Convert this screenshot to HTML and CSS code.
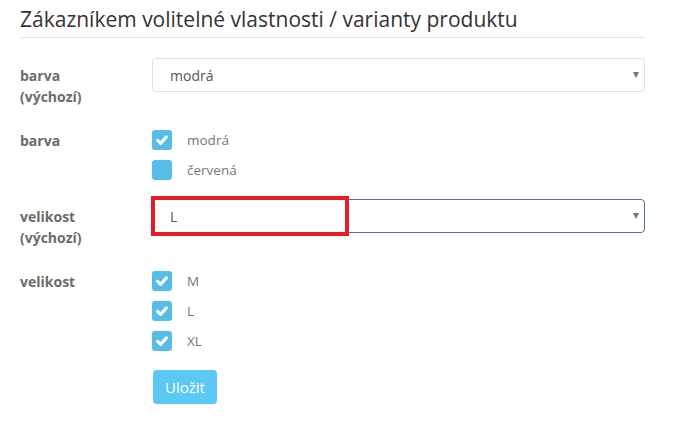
FILE: index.html
```html
<!DOCTYPE html>
<html lang="cs">
<head>
    <meta charset="UTF-8">
    <title>Varianty produktu</title>
    <link rel="stylesheet" href="styles.css">
</head>
<body>
    <div class="panel">
        <h2>Zákazníkem volitelné vlastnosti / varianty produktu</h2>

        <div class="form-row">
            <label class="control-label">barva<br>(výchozí)</label>
            <div class="select-wrap">
                <select>
                    <option>modrá</option>
                    <option>červená</option>
                </select>
            </div>
        </div>

        <div class="form-row">
            <label class="control-label">barva</label>
            <div class="checks">
                <div class="check">
                    <span class="box on"><svg viewBox="0 0 20 20"><path d="M5.6 10.4 L8.7 13.3 L14.4 6.9"/></svg></span>
                    <span class="check-text">modrá</span>
                </div>
                <div class="check">
                    <span class="box"></span>
                    <span class="check-text">červená</span>
                </div>
            </div>
        </div>

        <div class="form-row">
            <label class="control-label">velikost<br>(výchozí)</label>
            <div class="select-wrap focused">
                <select>
                    <option>L</option>
                    <option>M</option>
                    <option>XL</option>
                </select>
                <span class="highlight"></span>
            </div>
        </div>

        <div class="form-row">
            <label class="control-label">velikost</label>
            <div class="checks">
                <div class="check">
                    <span class="box on"><svg viewBox="0 0 20 20"><path d="M5.6 10.4 L8.7 13.3 L14.4 6.9"/></svg></span>
                    <span class="check-text">M</span>
                </div>
                <div class="check">
                    <span class="box on"><svg viewBox="0 0 20 20"><path d="M5.6 10.4 L8.7 13.3 L14.4 6.9"/></svg></span>
                    <span class="check-text">L</span>
                </div>
                <div class="check">
                    <span class="box on"><svg viewBox="0 0 20 20"><path d="M5.6 10.4 L8.7 13.3 L14.4 6.9"/></svg></span>
                    <span class="check-text">XL</span>
                </div>
            </div>
        </div>

        <div class="form-row">
            <span class="control-label"></span>
            <button class="btn-save">Uložit</button>
        </div>
    </div>
</body>
</html>
```

FILE: styles.css
```css
body {
    margin: 0;
    background: #fff;
    font-family: 'Open Sans', sans-serif;
    color: #333;
}
.panel {
    width: 625px;
    padding: 0 20px;
}
h2 {
    margin: 0 0 20px;
    padding: 6px 0 4px;
    font-size: 21px;
    font-weight: 400;
    line-height: 27px;
    color: #333;
    border-bottom: 1px solid #e5e5e5;
}
.form-row {
    display: flex;
    margin-bottom: 16px;
}
.control-label {
    width: 132px;
    flex-shrink: 0;
    padding-top: 7px;
    font-size: 14px;
    font-weight: bold;
    line-height: 21px;
    color: #6b6b6b;
}
.select-wrap {
    position: relative;
    width: 493px;
    height: 34px;
}
.select-wrap select {
    appearance: none;
    -webkit-appearance: none;
    width: 100%;
    height: 34px;
    padding: 0 17px;
    font-family: 'Open Sans', sans-serif;
    font-size: 14px;
    color: #555;
    background: #fff;
    border: 1px solid #e0e0e0;
    border-radius: 4px;
    outline: none;
}
.select-wrap::after {
    content: "";
    position: absolute;
    right: 6px;
    top: 14px;
    border-left: 3.5px solid transparent;
    border-right: 3.5px solid transparent;
    border-top: 6px solid #777;
}
.select-wrap.focused select {
    border-color: #50709a;
}
.highlight {
    position: absolute;
    left: -1px;
    top: -3px;
    width: 190px;
    height: 32px;
    border: 4px solid #e81c25;
}
.checks {
    display: flex;
    flex-direction: column;
    gap: 10px;
    padding: 7px 0 3px;
}
.check {
    display: flex;
    align-items: center;
    height: 20px;
}
.box {
    width: 20px;
    height: 20px;
    border-radius: 3px;
    background: #55bde6;
    display: flex;
}
.box svg {
    width: 20px;
    height: 20px;
}
.box svg path {
    fill: none;
    stroke: #fff;
    stroke-width: 3.2;
    stroke-linecap: round;
    stroke-linejoin: round;
}
.check-text {
    margin-left: 15px;
    font-size: 13.5px;
    color: #777;
}
.btn-save {
    margin-left: 1px;
    height: 34px;
    padding: 0 12px;
    font-family: 'Open Sans', sans-serif;
    font-size: 15px;
    color: #fff;
    background: #5bc9f3;
    border: none;
    border-radius: 4px;
}
```
